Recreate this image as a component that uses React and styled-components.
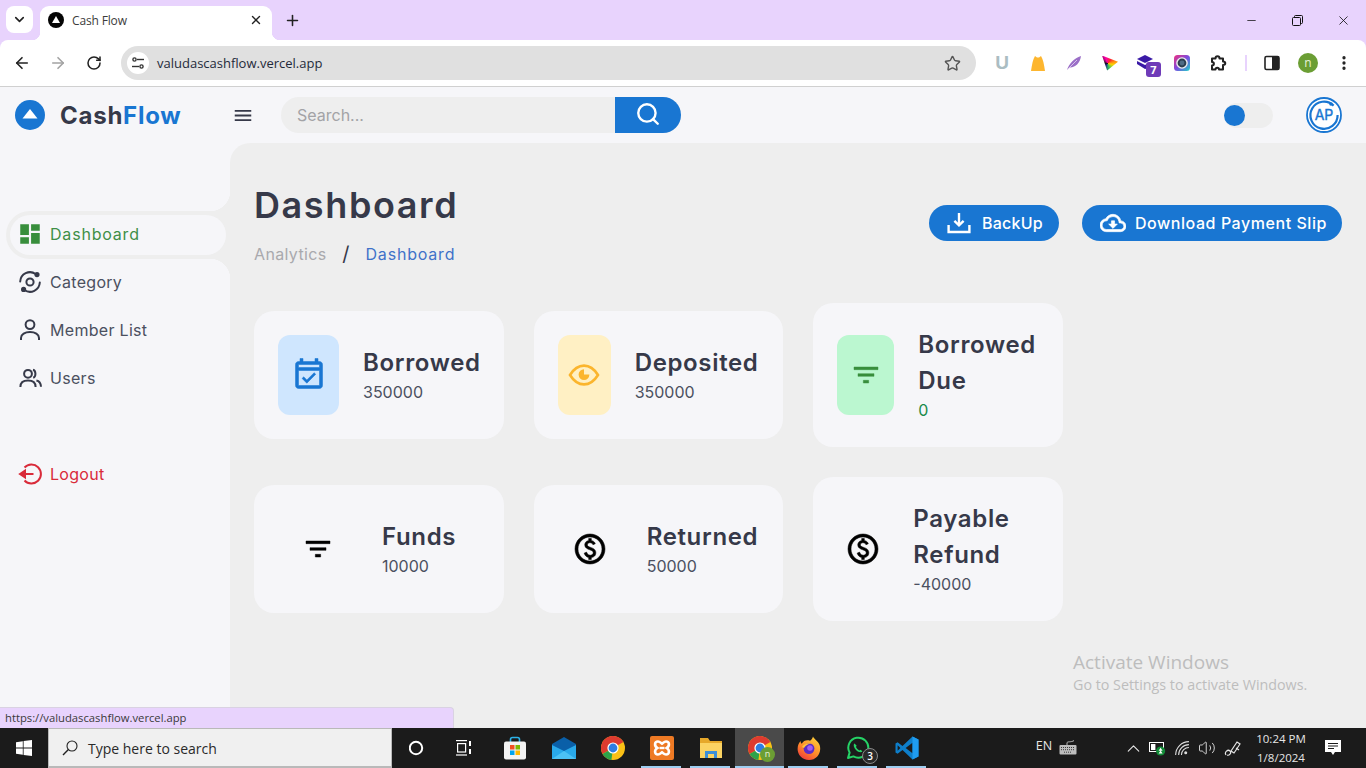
import React from 'react';
import styled, { createGlobalStyle } from 'styled-components';
import {
  MdDashboard,
  MdMenu,
  MdOutlineCloudDownload,
  MdOutlineEventAvailable,
  MdOutlineFilterList,
  MdOutlinePaid,
} from 'react-icons/md';
import {
  ArrowLeft,
  ArrowRight,
  ChevronDown,
  ChevronUp,
  Minus,
  MoreVertical,
  Plus,
  RotateCw,
  Search,
  Star,
  Volume2,
  X,
} from 'lucide-react';

const PURPLE = '#e8d3fd';
const PAGE = '#f6f6f9';
const MAIN = '#eeeeee';
const BLUE = '#1976d2';
const INK = '#363949';
const APP_FONT = 'Inter, "Liberation Sans", sans-serif';
const UI_FONT = '"Open Sans", "Noto Sans", sans-serif';

const GlobalStyle = createGlobalStyle`
  html, body {
    margin: 0;
    padding: 0;
    overflow: hidden;
  }
  * {
    box-sizing: border-box;
  }
`;

const Screen = styled.div`
  position: relative;
  width: 1366px;
  height: 768px;
  display: flex;
  flex-direction: column;
  overflow: hidden;
  font-family: ${APP_FONT};
  background: ${PAGE};
`;

/* browser chrome */
const BrowserTop = styled.div`
  background: ${PURPLE};
  flex: none;
`;

const TabStrip = styled.div`
  height: 40px;
  display: flex;
  align-items: flex-end;
  padding-left: 6px;
`;

const TabSwitcher = styled.div`
  width: 27px;
  height: 27px;
  margin-bottom: 7px;
  margin-right: 7px;
  border-radius: 8px;
  background: #fff;
  display: flex;
  align-items: center;
  justify-content: center;
  color: #222;
`;

const Tab = styled.div`
  position: relative;
  width: 232px;
  height: 34px;
  background: #fff;
  border-radius: 9px 9px 0 0;
  display: flex;
  align-items: center;
  padding: 0 9px 6px 8px;
  font: 12px ${UI_FONT};
  color: #3c3c3c;
  letter-spacing: -0.15px;

  &::before,
  &::after {
    content: '';
    position: absolute;
    bottom: 0;
    width: 8px;
    height: 8px;
  }
  &::before {
    left: -8px;
    background: radial-gradient(circle at 0 0, ${PURPLE} 8px, #fff 8.5px);
  }
  &::after {
    right: -8px;
    background: radial-gradient(circle at 100% 0, ${PURPLE} 8px, #fff 8.5px);
  }
`;

const TabTitle = styled.span`
  flex: 1;
  margin-left: 8px;
`;

const NewTab = styled.div`
  width: 20px;
  height: 34px;
  margin-left: 10px;
  padding-bottom: 6px;
  display: flex;
  align-items: center;
  justify-content: center;
  color: #222;
`;

const WindowControls = styled.div`
  margin-left: auto;
  height: 40px;
  display: flex;
  align-items: center;
`;

const WindowButton = styled.div`
  width: 46px;
  display: flex;
  justify-content: center;
  color: #111;
`;

const Toolbar = styled.div`
  height: 47px;
  background: #fff;
  border-radius: 8px 8px 0 0;
  border-bottom: 1px solid #d0d0d0;
  display: flex;
  align-items: center;
  padding-left: 4px;
`;

const NavButton = styled.div`
  width: 36px;
  display: flex;
  justify-content: center;
  color: ${(p) => (p.$disabled ? '#a3a3a3' : '#222')};
`;

const AddressBar = styled.div`
  width: 855px;
  height: 34px;
  margin-left: 9px;
  margin-right: 8px;
  border-radius: 17px;
  background: #e0e0e0;
  display: flex;
  align-items: center;
  padding: 0 15px 0 6px;
  font: 13px ${UI_FONT};
  color: #1f2a3a;
`;

const SiteChip = styled.div`
  width: 22px;
  height: 22px;
  border-radius: 50%;
  background: #fff;
  display: flex;
  align-items: center;
  justify-content: center;
  margin-right: 8px;
`;

const UrlText = styled.span`
  flex: 1;
`;

const ExtSlot = styled.div`
  position: relative;
  width: 36px;
  height: 24px;
  display: flex;
  align-items: center;
  justify-content: center;
  color: #222;
`;

const ExtLetter = styled.span`
  font: 700 19px "Liberation Sans", sans-serif;
  color: #abbdc2;
`;

const ExtBadge = styled.span`
  position: absolute;
  right: 3px;
  bottom: -2px;
  width: 15px;
  height: 15px;
  border-radius: 3px;
  background: #6f3bb8;
  color: #fff;
  font: 700 11px/15px ${UI_FONT};
  text-align: center;
`;

const PrismChip = styled.div`
  width: 16px;
  height: 15px;
  background: conic-gradient(from 40deg at 35% 50%, #ff2a2a, #ffd400, #34c759, #1c1c8c, #111, #ff00aa, #ff2a2a);
  clip-path: polygon(0 0, 100% 42%, 32% 100%);
`;

const ToolbarDivider = styled.div`
  width: 2px;
  height: 16px;
  margin: 0 7px 0 9px;
  background: ${PURPLE};
`;

const ProfileDot = styled.div`
  width: 20px;
  height: 20px;
  border-radius: 50%;
  background: #6b9e34;
  color: #e8f3d8;
  font: 12px/19px ${UI_FONT};
  text-align: center;
`;

/* app header */
const AppBody = styled.div`
  position: relative;
  flex: 1;
  display: flex;
  flex-direction: column;
  min-height: 0;
  background: ${PAGE};
`;

const Header = styled.header`
  height: 56px;
  flex: none;
  display: flex;
  align-items: center;
  padding: 0 24px 0 15px;
`;

const Brand = styled.div`
  width: 217px;
  display: flex;
  align-items: center;
  gap: 15px;
`;

const BrandName = styled.div`
  font-size: 24px;
  font-weight: 700;
  color: ${INK};
  letter-spacing: 0.75px;
`;

const BrandAccent = styled.span`
  color: ${BLUE};
`;

const MenuToggle = styled.div`
  width: 22px;
  margin-right: 27px;
  display: flex;
  justify-content: center;
  color: ${INK};
`;

const SearchBox = styled.div`
  width: 400px;
  height: 36px;
  display: flex;
  border-radius: 18px;
  overflow: hidden;
  background: ${MAIN};
`;

const SearchHint = styled.div`
  flex: 1;
  padding-left: 16px;
  font-size: 16px;
  line-height: 36px;
  color: #a3a3a6;
`;

const SearchButton = styled.div`
  width: 66px;
  padding-bottom: 3px;
  display: flex;
  align-items: center;
  justify-content: center;
  background: ${BLUE};
  color: #fff;
`;

const ThemeTrack = styled.div`
  width: 49px;
  height: 25px;
  margin-left: auto;
  margin-right: 33px;
  border-radius: 13px;
  background: ${MAIN};
  display: flex;
  align-items: center;
`;

const ThemeKnob = styled.div`
  width: 21px;
  height: 21px;
  border-radius: 50%;
  background: ${BLUE};
`;

/* sidebar + main */
const Workspace = styled.div`
  flex: 1;
  display: flex;
  min-height: 0;
`;

const Sidebar = styled.nav`
  width: 230px;
  flex: none;
  padding-top: 68px;
`;

const NavItem = styled.div`
  position: relative;
  height: 48px;
  display: flex;
  align-items: center;
  gap: 7px;
  padding: 0 0 2px 17px;
  margin-top: ${(p) => p.$gap || 0}px;
  font-size: 16px;
  letter-spacing: 0.3px;
  color: ${(p) => p.$color || '#4b5060'};
`;

const ActiveNavItem = styled(NavItem)`
  margin-left: 6px;
  padding: 0 0 0 4px;
  letter-spacing: 0.8px;
  background: ${MAIN};
  border-radius: 24px 0 0 24px;

  &::before,
  &::after {
    content: '';
    position: absolute;
    right: 0;
    width: 20px;
    height: 20px;
  }
  &::before {
    top: -20px;
    background: radial-gradient(circle at 0 0, ${PAGE} 20px, ${MAIN} 20.5px);
  }
  &::after {
    bottom: -20px;
    background: radial-gradient(circle at 0 100%, ${PAGE} 20px, ${MAIN} 20.5px);
  }
`;

const ActivePill = styled.div`
  width: 216px;
  height: 40px;
  border-radius: 20px;
  background: ${PAGE};
  display: flex;
  align-items: center;
  gap: 7px;
  padding: 0 0 2px 7px;
`;

const NavIcon = styled.span`
  width: 26px;
  height: 26px;
  flex: none;
  display: flex;
  align-items: center;
  justify-content: center;
`;

const Main = styled.main`
  flex: 1;
  min-width: 0;
  background: ${MAIN};
  border-radius: 20px 0 0 0;
  padding: 35px 24px 0;
`;

const PageHead = styled.div`
  height: 88px;
  display: flex;
  align-items: center;
  justify-content: space-between;
`;

const PageTitle = styled.h1`
  margin: 0;
  font-size: 36px;
  line-height: 54px;
  font-weight: 600;
  color: ${INK};
  letter-spacing: 1.6px;
`;

const Crumbs = styled.div`
  margin-top: 10px;
  display: flex;
  align-items: center;
  font-size: 16px;
  line-height: 24px;
  letter-spacing: 0.35px;
`;

const CrumbMuted = styled.span`
  color: #a9a9ad;
`;

const CrumbSlash = styled.span`
  width: 39px;
  text-align: center;
  color: ${INK};
  font-size: 20px;
`;

const CrumbCurrent = styled.span`
  color: #3f72c9;
  letter-spacing: 0.8px;
`;

const HeadActions = styled.div`
  display: flex;
  gap: 23px;
  margin-top: 2px;
`;

const ActionButton = styled.div`
  width: ${(p) => p.$w}px;
  height: 36px;
  border-radius: 18px;
  background: ${BLUE};
  color: #fff;
  display: flex;
  align-items: center;
  gap: ${(p) => p.$gap}px;
  padding: 0 0 1px 18px;
  font-size: 16px;
  font-weight: 500;
  letter-spacing: ${(p) => p.$track}px;
  white-space: nowrap;

  svg path[fill='none'] {
    stroke: none;
  }
`;

const CardGrid = styled.div`
  width: 809px;
  margin-top: 37px;
  display: grid;
  grid-template-columns: repeat(3, minmax(0, 1fr));
  gap: 30px;
  align-items: center;
`;

const Card = styled.div`
  background: ${PAGE};
  border-radius: 20px;
  padding: 24px;
  display: flex;
  align-items: center;
  gap: 24px;
`;

const CardIcon = styled.div`
  width: ${(p) => p.$w}px;
  height: 80px;
  flex: none;
  border-radius: 12px;
  background: ${(p) => p.$bg || 'transparent'};
  color: ${(p) => p.$color || '#000'};
  display: flex;
  align-items: center;
  justify-content: center;

  svg path[fill='none'] {
    stroke: none;
  }
`;

const CardTitle = styled.div`
  font-size: 24px;
  line-height: 36px;
  font-weight: 600;
  color: ${INK};
  letter-spacing: 0.65px;
`;

const CardValue = styled.div`
  margin: -1px 0 1px;
  font-size: 16px;
  line-height: 24px;
  color: ${(p) => p.$color || '#4b5060'};
`;

/* overlays */
const StatusBubble = styled.div`
  position: absolute;
  left: 0;
  bottom: 0;
  width: 454px;
  height: 21px;
  padding-left: 5px;
  background: ${PURPLE};
  border-top: 1px solid #d9d2e2;
  border-right: 1px solid #d9d2e2;
  border-radius: 0 4px 0 0;
  font: 11.25px/20px ${UI_FONT};
  color: #3a3a3a;
`;

const Watermark = styled.div`
  position: absolute;
  left: 1073px;
  top: 563px;
  color: #bdbdbd;
  font-family: ${UI_FONT};
`;

const WatermarkTitle = styled.div`
  font-size: 19px;
  line-height: 24px;
`;

const WatermarkNote = styled.div`
  font-size: 14.3px;
  line-height: 20px;
  margin-top: 1px;
`;

/* taskbar */
const Taskbar = styled.footer`
  height: 40px;
  flex: none;
  display: flex;
  align-items: stretch;
  background: #1b1b1b;
  color: #eee;
  font-family: ${UI_FONT};
`;

const StartButton = styled.div`
  width: 48px;
  display: flex;
  align-items: center;
  justify-content: center;
`;

const TaskSearch = styled.div`
  width: 344px;
  display: flex;
  align-items: center;
  gap: 10px;
  padding: 1px 0 0 13px;
  background: #f0f0f0;
  border: 1px solid #b9b9b9;
  border-bottom-width: 2px;
  font-size: 14px;
  color: #2a2a2a;
`;

const TaskItem = styled.div`
  position: relative;
  width: 49px;
  display: flex;
  align-items: center;
  justify-content: center;
  background: ${(p) => (p.$active ? '#4a4a4a' : 'transparent')};

  &::after {
    content: '';
    display: ${(p) => (p.$running ? 'block' : 'none')};
    position: absolute;
    left: ${(p) => (p.$active ? 0 : 4)}px;
    right: ${(p) => (p.$active ? 0 : 5)}px;
    bottom: 0;
    height: 2px;
    background: #9dcdf0;
  }
`;

const TaskBadge = styled.span`
  position: absolute;
  right: 4px;
  bottom: 4px;
  width: 16px;
  height: 16px;
  border-radius: 50%;
  background: #2a2a2a;
  border: 1px solid #8a8a8a;
  color: #fff;
  font-size: 10px;
  line-height: 14px;
  font-weight: 600;
  text-align: center;
`;

const TaskProfile = styled.span`
  position: absolute;
  right: 9px;
  bottom: 6px;
  width: 15px;
  height: 15px;
  border-radius: 50%;
  background: #6b9e34;
  color: #e8f3d8;
  font-size: 9px;
  line-height: 14px;
  text-align: center;
`;

const Tray = styled.div`
  margin-left: auto;
  display: flex;
  align-items: stretch;
`;

const TraySlot = styled.div`
  width: ${(p) => p.$w}px;
  margin-right: ${(p) => p.$after || 0}px;
  padding-bottom: ${(p) => p.$lift || 0}px;
  display: flex;
  align-items: center;
  justify-content: center;
  font-size: 12.5px;
  color: #e6e6e6;
`;

const Clock = styled.div`
  width: 70px;
  text-align: center;
  font-size: 11.5px;
  line-height: 19px;
  padding-top: 1px;
  color: #e6e6e6;
`;

/* drawings */
const LogoMark = () => (
  <svg width="30" height="30" viewBox="0 0 30 30">
    <circle cx="15" cy="15" r="15" fill={BLUE} />
    <path d="M15 9 L22.5 18.5 H7.5 Z" fill="#fff" />
  </svg>
);

const AvatarMark = () => (
  <svg width="36" height="36" viewBox="0 0 36 36">
    <circle cx="18" cy="18" r="17" fill="#fff" stroke={BLUE} strokeWidth="1.8" />
    <path
      d="M27.6 8.6 A13.6 13.6 0 1 0 31.6 18"
      fill="none"
      stroke={BLUE}
      strokeWidth="2.2"
    />
    <circle cx="25" cy="7" r="1.8" fill={BLUE} />
    <text x="18" y="23" textAnchor="middle" fontSize="14" fontWeight="400" fontFamily="Inter" fill={BLUE} stroke={BLUE} strokeWidth="0.4">
      AP
    </text>
  </svg>
);

const FaviconMark = () => (
  <svg width="16" height="16" viewBox="0 0 16 16">
    <circle cx="8" cy="8" r="8" fill="#050505" />
    <path d="M8 4 L12 11 H4 Z" fill="#fff" />
  </svg>
);

const TuneGlyph = () => (
  <svg width="14" height="14" viewBox="0 0 14 14" fill="none" stroke="#333" strokeWidth="1.4">
    <circle cx="3.5" cy="3.5" r="1.6" />
    <path d="M6 3.5 H13" />
    <circle cx="10.5" cy="10.5" r="1.6" />
    <path d="M1 10.5 H8" />
  </svg>
);

const RestoreGlyph = () => (
  <svg width="11" height="11" viewBox="0 0 11 11" fill="none" stroke="#111">
    <rect x="0.5" y="2.5" width="8" height="8" rx="1" />
    <path d="M2.5 2.5 V1.5 a1 1 0 0 1 1 -1 H9.5 a1 1 0 0 1 1 1 V7.5 a1 1 0 0 1 -1 1 H8.5" />
  </svg>
);

const HoodGlyph = () => (
  <svg width="16" height="16" viewBox="0 0 16 16">
    <path d="M1 16 C2 9 3 4 5 1 L7 2.5 H9 L11 1 C13 4 14 9 15 16 Z" fill="#fdb62f" />
  </svg>
);

const FeatherGlyph = () => (
  <svg width="16" height="16" viewBox="0 0 16 16">
    <path d="M1 15 C3 9 8 3 15 1 C14 8 10 12 4 12.5 Z" fill="#9b6fc7" />
    <path d="M1 15 L11 5" stroke="#e6d8f2" strokeWidth="0.8" />
  </svg>
);

const StackGlyph = () => (
  <svg width="18" height="16" viewBox="0 0 18 16">
    <path d="M8 0 L16 4 L8 8 L0 4 Z" fill="#3a1aa6" />
    <path d="M0 6 L8 10 L12 8 V13 L8 14 L0 9 Z" fill="#3a1aa6" />
  </svg>
);

const RingGlyph = () => (
  <svg width="16" height="16" viewBox="0 0 16 16">
    <defs>
      <linearGradient id="ringFill" x1="0" y1="0" x2="1" y2="1">
        <stop offset="0" stopColor="#f0307e" />
        <stop offset="0.5" stopColor="#7a4ce0" />
        <stop offset="1" stopColor="#1fd6c8" />
      </linearGradient>
    </defs>
    <rect width="16" height="16" rx="3.5" fill="url(#ringFill)" />
    <circle cx="8" cy="8" r="5.8" fill="#eee" />
    <circle cx="8" cy="8" r="4.4" fill="#2c3e50" />
    <circle cx="8" cy="8" r="2.4" fill="#4f6b84" />
  </svg>
);

const PuzzleGlyph = () => (
  <svg width="18" height="18" viewBox="0 0 18 18" fill="none" stroke="#222" strokeWidth="2" strokeLinejoin="round">
    <path d="M3 4.5 H6.5 C6.5 1.5 10.5 1.5 10.5 4.5 H14 V7.5 C17 7.5 17 11 14 11 V15.5 H10 C10 13 6.5 13 6.5 15.5 H3 V11.5 C5.5 11.5 5.5 8 3 8 Z" />
  </svg>
);

const SidePanelGlyph = () => (
  <svg width="16" height="16" viewBox="0 0 16 16">
    <rect x="1" y="1.5" width="14" height="13" rx="1.5" fill="none" stroke="#222" strokeWidth="1.6" />
    <rect x="8" y="1.5" width="7" height="13" fill="#222" />
  </svg>
);

const EyeGlyph = () => (
  <svg width="32" height="32" viewBox="0 0 32 32" fill="none">
    <path
      d="M2 16 C6 9.5 10.5 6.6 16 6.6 C21.5 6.6 26 9.5 30 16 C26 22.5 21.5 25.4 16 25.4 C10.5 25.4 6 22.5 2 16 Z"
      stroke="#fbb52d"
      strokeWidth="2.6"
    />
    <path d="M16 10.2 a5.4 5.4 0 1 0 5.4 5.4 H16 Z" fill="#fbb52d" />
  </svg>
);

const CategoryGlyph = () => (
  <svg width="26" height="26" viewBox="0 0 26 26" fill="none" stroke={INK} strokeWidth="2" strokeLinecap="round">
    <circle cx="13" cy="13" r="3.6" />
    <path d="M3.2 12.5 A9.8 9.8 0 0 1 18.6 5" />
    <path d="M22.8 13.5 A9.8 9.8 0 0 1 7.4 21" />
    <circle cx="20" cy="5.6" r="1.6" fill={INK} />
    <circle cx="6.6" cy="20.4" r="1.6" fill={INK} />
  </svg>
);

const PersonGlyph = () => (
  <svg width="26" height="26" viewBox="0 0 26 26" fill="none" stroke={INK} strokeWidth="2">
    <circle cx="13" cy="7.6" r="4.4" />
    <path d="M4 23 V21 C4 17.3 8 15 13 15 C18 15 22 17.3 22 21 V23" />
  </svg>
);

const GroupGlyph = () => (
  <svg width="26" height="26" viewBox="0 0 26 26" fill="none" stroke={INK} strokeWidth="2">
    <circle cx="11" cy="8.8" r="3.9" />
    <path d="M3.4 22 C3.4 17.5 6.5 15.6 11 15.6 C15.5 15.6 18.6 17.5 18.6 22" />
    <path d="M16 4.8 C19 5.6 19.4 11.6 16.2 12.8" />
    <path d="M19.4 15.6 C22.2 16.2 23.8 18.4 24 21.8" />
  </svg>
);

const LogoutGlyph = () => (
  <svg width="26" height="26" viewBox="0 0 26 26" fill="none" stroke="#d92b3a" strokeWidth="2">
    <path d="M7.5 6.5 A9.5 9.5 0 1 1 7.5 19.5" />
    <path d="M6 13 H16.5" />
    <path d="M3 13 L8 9.6 V16.4 Z" fill="#d92b3a" />
  </svg>
);

const TrayDownGlyph = () => (
  <svg width="24" height="24" viewBox="0 0 24 24" fill="none" stroke="#fff" strokeWidth="2.4">
    <path d="M12 2 V14" />
    <path d="M7.4 9.8 L12 14.4 L16.6 9.8" />
    <path d="M1.6 14 V21 H22.4 V14" />
  </svg>
);

const WindowsLogo = () => (
  <svg width="16" height="16" viewBox="0 0 16 16" fill="#fff">
    <path d="M0 2.2 L6.8 1.2 V7.6 H0 Z" />
    <path d="M7.6 1.1 L16 0 V7.6 H7.6 Z" />
    <path d="M0 8.4 H6.8 V14.8 L0 13.8 Z" />
    <path d="M7.6 8.4 H16 V16 L7.6 14.9 Z" />
  </svg>
);

const CortanaRing = () => (
  <svg width="16" height="16" viewBox="0 0 16 16">
    <circle cx="7" cy="8" r="6.2" fill="none" stroke="#fff" strokeWidth="2" />
  </svg>
);

const TaskViewGlyph = () => (
  <svg width="20" height="16" viewBox="0 0 20 16" fill="none" stroke="#fff" strokeWidth="1.2">
    <path d="M0 0.6 H11" />
    <rect x="1.6" y="3.6" width="8" height="8.4" />
    <path d="M0 15 H11" />
    <path d="M14 1 V6 M14 9 V14" strokeWidth="2" />
  </svg>
);

const StoreGlyph = () => (
  <svg width="24" height="24" viewBox="0 0 24 24">
    <path d="M7.5 6 V3.5 a2 2 0 0 1 2 -2 h5 a2 2 0 0 1 2 2 V6" fill="none" stroke="#2cb2e8" strokeWidth="1.6" />
    <rect x="1" y="5.5" width="22" height="18" rx="2" fill="#f3f3f3" />
    <rect x="7" y="9" width="4.5" height="4.5" fill="#f25022" />
    <rect x="12.5" y="9" width="4.5" height="4.5" fill="#7fba00" />
    <rect x="7" y="14.5" width="4.5" height="4.5" fill="#00a4ef" />
    <rect x="12.5" y="14.5" width="4.5" height="4.5" fill="#ffb900" />
  </svg>
);

const MailGlyph = () => (
  <svg width="24" height="22" viewBox="0 0 24 22">
    <path d="M0 7 L12 0 L24 7 V9 L12 15 L0 9 Z" fill="#0a5fa8" />
    <path d="M0 8 L12 14 L24 8 V22 H0 Z" fill="#29a9ea" />
    <path d="M0 22 L12 14 L24 22 Z" fill="#4cc2f5" />
  </svg>
);

const ChromeGlyph = () => (
  <svg width="24" height="24" viewBox="0 0 24 24">
    <circle cx="12" cy="12" r="12" fill="#fbc116" />
    <path d="M12 12 L22.4 6 A12 12 0 0 0 1.6 18 Z" fill="#de3b30" />
    <path d="M12 12 L1.6 18 A12 12 0 0 0 10.4 23.9 L12 12 Z" fill="#2ea24a" />
    <circle cx="12" cy="12" r="5.6" fill="#fff" />
    <circle cx="12" cy="12" r="4.4" fill="#2f7de1" />
  </svg>
);

const XamppGlyph = () => (
  <svg width="24" height="24" viewBox="0 0 24 24">
    <rect width="24" height="24" rx="2" fill="#ee7a24" />
    <path
      d="M8 5.5 C9.6 5.5 10.6 6.6 12 7.6 C13.4 6.6 14.4 5.5 16 5.5 C19.6 5.5 20 10 16.6 12 C20 14 19.6 18.5 16 18.5 C14.4 18.5 13.4 17.4 12 16.4 C10.6 17.4 9.6 18.5 8 18.5 C4.4 18.5 4 14 7.4 12 C4 10 4.4 5.5 8 5.5 Z"
      fill="none"
      stroke="#fff"
      strokeWidth="2.6"
    />
    <path d="M9.6 12 H14.4" stroke="#fff" strokeWidth="2.4" />
  </svg>
);

const FolderGlyph = () => (
  <svg width="24" height="22" viewBox="0 0 24 22">
    <path d="M1 1 H9 L11 4 H23 V20 H1 Z" fill="#e6a82a" />
    <rect x="1" y="6" width="22" height="15" fill="#fbd363" />
    <path d="M6 21 V14 H18 V21 H15 V17 H9 V21 Z" fill="#3c8fd8" />
  </svg>
);

const FirefoxGlyph = () => (
  <svg width="24" height="24" viewBox="0 0 24 24">
    <defs>
      <linearGradient id="foxFlame" x1="0.8" y1="0" x2="0.2" y2="1">
        <stop offset="0" stopColor="#ffd23a" />
        <stop offset="0.55" stopColor="#ff8a2a" />
        <stop offset="1" stopColor="#f0363c" />
      </linearGradient>
    </defs>
    <path
      d="M16 0.5 C17 3 21 5 22.6 9 C25 16 20 24 12 24 C5 24 0.6 18.6 0.6 13 C0.6 9.6 2 6.6 3.6 5 C3.6 6.4 4 7.2 4.8 7.8 C6.4 4.6 10 3.6 13 4.8 C14.4 3.8 15.6 2.4 16 0.5 Z"
      fill="url(#foxFlame)"
    />
    <circle cx="12" cy="12.6" r="5.4" fill="#5b2cc4" />
    <circle cx="13" cy="12" r="2.8" fill="#a35cf0" />
    <path d="M5 11 C7 8.4 10 7 14 7.4 C11 8 8.6 9.4 7 12 Z" fill="#ffc53a" />
  </svg>
);

const WhatsappGlyph = () => (
  <svg width="24" height="24" viewBox="0 0 24 24" fill="none">
    <path
      d="M2 22 L3.6 16.6 A10 10 0 1 1 7.4 20.4 Z"
      stroke="#25d366"
      strokeWidth="2"
      strokeLinejoin="round"
    />
    <path
      d="M8.4 7.6 C7 9 8 12 10 14 C12 16 15 17 16.4 15.6 L14.8 13.8 L13.4 14.4 C12 13.8 10.6 12.4 10 11 L10.6 9.6 Z"
      fill="#25d366"
    />
  </svg>
);

const VscodeGlyph = () => (
  <svg width="24" height="24" viewBox="0 0 24 24">
    <path d="M17.5 0.5 L23.5 3.4 V20.6 L17.5 23.5 L7.5 14 L2.6 17.8 L0.5 16.6 V7.4 L2.6 6.2 L7.5 10 Z" fill="#0e7fcb" />
    <path d="M17.5 6.8 L10.6 12 L17.5 17.2 Z" fill="#1b1b1b" />
    <path d="M2.6 9.2 V14.8 L5.4 12 Z" fill="#1b1b1b" />
    <path d="M17.5 0.5 L23.5 3.4 V20.6 L17.5 23.5 Z" fill="#1f9cf0" />
  </svg>
);

const MagnifierGlyph = () => (
  <svg width="16" height="16" viewBox="0 0 16 16" fill="none" stroke="#222" strokeWidth="1.1">
    <circle cx="10" cy="6" r="5" />
    <path d="M6.4 9.6 L1 15" strokeWidth="1.4" />
  </svg>
);

const KeyboardGlyph = () => (
  <svg width="18" height="15" viewBox="0 0 18 15" fill="none" stroke="#bdbdbd">
    <path d="M8 5 V3 C8 1 12 2.6 15 0.6" />
    <rect x="0.5" y="5" width="17" height="9.5" rx="1" fill="#bdbdbd" stroke="none" />
    <path d="M2 7.5 H16 M2 9.7 H16 M5 12.2 H13" stroke="#3b3b3b" strokeDasharray="1 1" />
  </svg>
);

const BatteryGlyph = () => (
  <svg width="17" height="15" viewBox="0 0 17 15">
    <rect x="0.5" y="1.5" width="14" height="9" fill="none" stroke="#fff" />
    <rect x="2" y="3" width="4.4" height="6" fill="#fff" />
    <circle cx="11.6" cy="10" r="4.6" fill="#128a36" />
    <path d="M11.6 6.8 L13.6 9.8 H9.6 Z M11.6 9.4 L13.6 12.4 H9.6 Z" fill="#fff" />
  </svg>
);

const WifiGlyph = () => (
  <svg width="15" height="15" viewBox="0 0 14 14" fill="none" stroke="#ddd" strokeWidth="1">
    <path d="M0.6 13 A12.4 12.4 0 0 1 13 0.6" />
    <path d="M3.4 13 A9.6 9.6 0 0 1 13 3.4" />
    <path d="M6 13 A7 7 0 0 1 13 6" />
    <circle cx="10" cy="11" r="1.4" fill="#ddd" stroke="none" />
  </svg>
);

const PenGlyph = () => (
  <svg width="18" height="18" viewBox="0 0 18 18" fill="none" stroke="#e6e6e6" strokeWidth="1.2">
    <path d="M7 12 L13 3 L16 5 L10 14 Z" />
    <path d="M2 16 C0 13 4 10 6 12 C8 14 5 17 3 16" />
    <path d="M12 9 L15 11" />
  </svg>
);

const NotifyGlyph = () => (
  <svg width="16" height="16" viewBox="0 0 16 16">
    <path d="M0 0 H16 V12 H10 L8 15 L6 12 H0 Z" fill="#fff" />
    <path d="M3 3.5 H13 M3 6 H13 M3 8.5 H9" stroke="#1b1b1b" />
  </svg>
);

const navLinks = [
  { label: 'Category', icon: <CategoryGlyph /> },
  { label: 'Member List', icon: <PersonGlyph /> },
  { label: 'Users', icon: <GroupGlyph /> },
];

const boldBars = { stroke: 'currentColor', strokeWidth: 0.35 };

const cards = [
  { title: 'Borrowed', value: '350000', w: 61, bg: '#cfe6fe', color: BLUE, icon: <MdOutlineEventAvailable size={36} {...boldBars} /> },
  { title: 'Deposited', value: '350000', w: 53, bg: '#fff0c4', color: '#fbb52d', icon: <EyeGlyph /> },
  { title: 'Borrowed Due', value: '0', w: 57, bg: '#bbf7d0', color: '#388e3c', valueColor: '#1a8a4a', icon: <MdOutlineFilterList size={32} {...boldBars} /> },
  { title: 'Funds', value: '10000', w: 80, icon: <MdOutlineFilterList size={32} {...boldBars} /> },
  { title: 'Returned', value: '50000', w: 65, icon: <MdOutlinePaid size={36} {...boldBars} /> },
  { title: 'Payable Refund', value: '-40000', w: 52, icon: <MdOutlinePaid size={36} {...boldBars} /> },
];

const taskApps = [
  { key: 'cortana', icon: <CortanaRing /> },
  { key: 'taskview', icon: <TaskViewGlyph /> },
  { key: 'store', icon: <StoreGlyph /> },
  { key: 'mail', icon: <MailGlyph /> },
  { key: 'chrome', icon: <ChromeGlyph /> },
  { key: 'xampp', icon: <XamppGlyph />, running: true },
  { key: 'files', icon: <FolderGlyph />, running: true },
  { key: 'chrome-profile', icon: <ChromeGlyph />, running: true, active: true, profile: 'n' },
  { key: 'firefox', icon: <FirefoxGlyph />, running: true },
  { key: 'whatsapp', icon: <WhatsappGlyph />, running: true, badge: '3' },
  { key: 'vscode', icon: <VscodeGlyph />, running: true },
];

export default function App() {
  return (
    <Screen>
      <GlobalStyle />
      <BrowserTop>
        <TabStrip>
          <TabSwitcher>
            <ChevronDown size={15} strokeWidth={2.6} />
          </TabSwitcher>
          <Tab>
            <FaviconMark />
            <TabTitle>Cash Flow</TabTitle>
            <X size={14} strokeWidth={2.4} color="#222" />
          </Tab>
          <NewTab>
            <Plus size={17} strokeWidth={2.2} />
          </NewTab>
          <WindowControls>
            <WindowButton>
              <Minus size={13} strokeWidth={1.4} />
            </WindowButton>
            <WindowButton>
              <RestoreGlyph />
            </WindowButton>
            <WindowButton>
              <X size={15} strokeWidth={1.3} />
            </WindowButton>
          </WindowControls>
        </TabStrip>
        <Toolbar>
          <NavButton>
            <ArrowLeft size={18} strokeWidth={2.2} />
          </NavButton>
          <NavButton $disabled>
            <ArrowRight size={18} strokeWidth={2.2} />
          </NavButton>
          <NavButton>
            <RotateCw size={16} strokeWidth={2.3} />
          </NavButton>
          <AddressBar>
            <SiteChip>
              <TuneGlyph />
            </SiteChip>
            <UrlText>valudascashflow.vercel.app</UrlText>
            <Star size={17} strokeWidth={2} color="#555" />
          </AddressBar>
          <ExtSlot>
            <ExtLetter>U</ExtLetter>
          </ExtSlot>
          <ExtSlot>
            <HoodGlyph />
          </ExtSlot>
          <ExtSlot>
            <FeatherGlyph />
          </ExtSlot>
          <ExtSlot>
            <PrismChip />
          </ExtSlot>
          <ExtSlot>
            <StackGlyph />
            <ExtBadge>7</ExtBadge>
          </ExtSlot>
          <ExtSlot>
            <RingGlyph />
          </ExtSlot>
          <ExtSlot>
            <PuzzleGlyph />
          </ExtSlot>
          <ToolbarDivider />
          <ExtSlot>
            <SidePanelGlyph />
          </ExtSlot>
          <ExtSlot>
            <ProfileDot>n</ProfileDot>
          </ExtSlot>
          <ExtSlot>
            <MoreVertical size={18} strokeWidth={2.4} />
          </ExtSlot>
        </Toolbar>
      </BrowserTop>

      <AppBody>
        <Header>
          <Brand>
            <LogoMark />
            <BrandName>
              Cash<BrandAccent>Flow</BrandAccent>
            </BrandName>
          </Brand>
          <MenuToggle>
            <MdMenu size={29} />
          </MenuToggle>
          <SearchBox>
            <SearchHint>Search...</SearchHint>
            <SearchButton>
              <Search size={26} strokeWidth={2.2} />
            </SearchButton>
          </SearchBox>
          <ThemeTrack>
            <ThemeKnob />
          </ThemeTrack>
          <AvatarMark />
        </Header>

        <Workspace>
          <Sidebar>
            <ActiveNavItem $color="#3f8f47">
              <ActivePill>
                <NavIcon>
                  <MdDashboard size={26} color="#388e3c" />
                </NavIcon>
                Dashboard
              </ActivePill>
            </ActiveNavItem>
            {navLinks.map((link) => (
              <NavItem key={link.label}>
                <NavIcon>{link.icon}</NavIcon>
                {link.label}
              </NavItem>
            ))}
            <NavItem $gap={48} $color="#d92b3a">
              <NavIcon>
                <LogoutGlyph />
              </NavIcon>
              Logout
            </NavItem>
          </Sidebar>

          <Main>
            <PageHead>
              <div>
                <PageTitle>Dashboard</PageTitle>
                <Crumbs>
                  <CrumbMuted>Analytics</CrumbMuted>
                  <CrumbSlash>/</CrumbSlash>
                  <CrumbCurrent>Dashboard</CrumbCurrent>
                </Crumbs>
              </div>
              <HeadActions>
                <ActionButton $w={130} $gap={11} $track={0.25}>
                  <TrayDownGlyph />
                  BackUp
                </ActionButton>
                <ActionButton $w={260} $gap={9} $track={0.55}>
                  <MdOutlineCloudDownload size={26} stroke="currentColor" strokeWidth={0.6} />
                  Download Payment Slip
                </ActionButton>
              </HeadActions>
            </PageHead>

            <CardGrid>
              {cards.map((card) => (
                <Card key={card.title}>
                  <CardIcon $w={card.w} $bg={card.bg} $color={card.color}>
                    {card.icon}
                  </CardIcon>
                  <div>
                    <CardTitle>{card.title}</CardTitle>
                    <CardValue $color={card.valueColor}>{card.value}</CardValue>
                  </div>
                </Card>
              ))}
            </CardGrid>
          </Main>
        </Workspace>

        <Watermark>
          <WatermarkTitle>Activate Windows</WatermarkTitle>
          <WatermarkNote>Go to Settings to activate Windows.</WatermarkNote>
        </Watermark>
        <StatusBubble>https://valudascashflow.vercel.app</StatusBubble>
      </AppBody>

      <Taskbar>
        <StartButton>
          <WindowsLogo />
        </StartButton>
        <TaskSearch>
          <MagnifierGlyph />
          Type here to search
        </TaskSearch>
        {taskApps.map((app) => (
          <TaskItem key={app.key} $running={app.running} $active={app.active}>
            {app.icon}
            {app.badge && <TaskBadge>{app.badge}</TaskBadge>}
            {app.profile && <TaskProfile>{app.profile}</TaskProfile>}
          </TaskItem>
        ))}
        <Tray>
          <TraySlot $w={24} $lift={6}>EN</TraySlot>
          <TraySlot $w={24} $after={41} $lift={2}>
            <KeyboardGlyph />
          </TraySlot>
          <TraySlot $w={24}>
            <ChevronUp size={21} strokeWidth={1.3} />
          </TraySlot>
          <TraySlot $w={25}>
            <BatteryGlyph />
          </TraySlot>
          <TraySlot $w={24}>
            <WifiGlyph />
          </TraySlot>
          <TraySlot $w={26}>
            <Volume2 size={18} strokeWidth={1.2} />
          </TraySlot>
          <TraySlot $w={26}>
            <PenGlyph />
          </TraySlot>
          <Clock>
            10:24 PM
            <br />
            1/8/2024
          </Clock>
          <TraySlot $w={34} $after={16}>
            <NotifyGlyph />
          </TraySlot>
        </Tray>
      </Taskbar>
    </Screen>
  );
}
